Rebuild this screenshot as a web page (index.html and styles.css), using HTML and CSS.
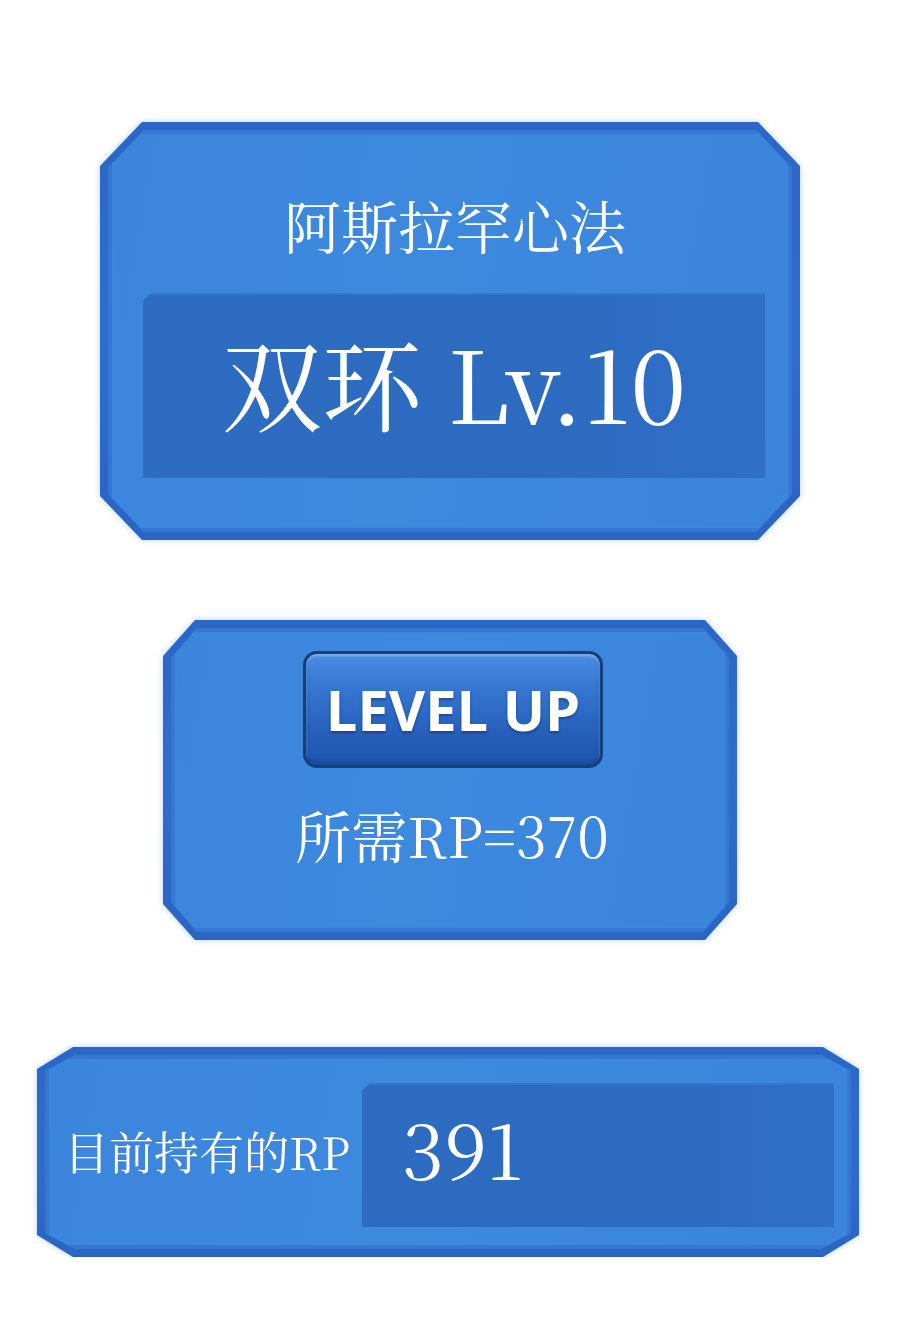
FILE: index.html
```html
<!DOCTYPE html>
<html lang="zh-CN">
<head>
  <meta charset="UTF-8">
  <title>阿斯拉罕心法</title>
  <link rel="stylesheet" href="styles.css">
</head>
<body>
<div class="page">
  <!-- skill card -->
  <div class="glow skill">
    <div class="frame">
      <div class="face">
        <div class="title">阿斯拉罕心法</div>
        <div class="well">
          <span class="level">双环 Lv.10</span>
        </div>
      </div>
    </div>
  </div>

  <!-- level up card -->
  <div class="glow upgrade">
    <div class="frame">
      <div class="face">
        <div class="btn">LEVEL UP</div>
        <div class="cost">所需RP=370</div>
      </div>
    </div>
  </div>

  <!-- rp bar -->
  <div class="glow wallet">
    <div class="frame">
      <div class="face">
        <div class="label">目前持有的RP</div>
        <div class="well">
          <span class="amount">391</span>
        </div>
      </div>
    </div>
  </div>
</div>
</body>
</html>
```
FILE: styles.css
```css
body {
  margin: 0;
  background: #fff;
  font-family: "Noto Serif CJK SC", "Liberation Serif", "Noto Sans CJK SC", serif;
  color: #fff;
}

.page {
  display: flex;
  flex-direction: column;
  align-items: center;
  padding-top: 122px;
}

.glow {
  filter: drop-shadow(0 0 3px rgba(90, 150, 235, 0.45));
}

.frame {
  --cx: 42px;
  --cy: 44px;
  background: linear-gradient(180deg, #2c66c6 0%, #2f6dcd 50%, #2a64c4 100%);
  padding: 8px;
  clip-path: polygon(var(--cx) 0, calc(100% - var(--cx)) 0, 100% var(--cy), 100% calc(100% - var(--cy)), calc(100% - var(--cx)) 100%, var(--cx) 100%, 0 calc(100% - var(--cy)), 0 var(--cy));
}

.face {
  --fx: calc(var(--cx) - 6px);
  --fy: calc(var(--cy) - 6px);
  background: linear-gradient(100deg, #3b86dc 0%, #3d89de 45%, #3a85db 100%);
  box-shadow: inset 0 0 0 4px #3478d4, inset 0 0 0 6px #3c87dc;
  clip-path: polygon(var(--fx) 0, calc(100% - var(--fx)) 0, 100% var(--fy), 100% calc(100% - var(--fy)), calc(100% - var(--fx)) 100%, var(--fx) 100%, 0 calc(100% - var(--fy)), 0 var(--fy));
}

.well {
  background: linear-gradient(90deg, #2e6cc2 0%, #2d6bc0 60%, #2f6fc6 100%);
  box-shadow: inset 0 2px 0 #3377cc;
  clip-path: polygon(8px 0, 100% 0, 100% 100%, 0 100%, 0 8px);
}

/* skill card */
.skill .frame {
  width: 684px;
}

.skill .face {
  padding: 64px 27px 54px 35px;
}

.title {
  font-size: 57px;
  line-height: 60px;
  text-align: center;
  margin-bottom: 39px;
  padding-left: 2px;
}

.skill .well {
  height: 185px;
  display: flex;
  align-items: center;
  justify-content: center;
}

.level {
  font-size: 100px;
  line-height: 1;
  padding-bottom: 10px;
}

/* level up card */
.upgrade {
  margin-top: 80px;
}

.upgrade .frame {
  --cx: 32px;
  --cy: 36px;
  width: 558px;
}

.upgrade .face {
  display: flex;
  flex-direction: column;
  align-items: center;
  padding: 23px 0 68px;
}

.btn {
  box-sizing: border-box;
  width: 300px;
  height: 117px;
  margin-left: 6px;
  padding-bottom: 2px;
  border: 3px solid #163d7c;
  border-radius: 14px;
  background: linear-gradient(180deg, #4a8de2 0%, #3577d2 30%, #2660bb 70%, #1e56ad 100%);
  box-shadow: inset 0 2px 3px rgba(255, 255, 255, 0.35), inset 0 -3px 4px rgba(10, 40, 100, 0.35);
  display: flex;
  align-items: center;
  justify-content: center;
  font-family: "Open Sans", "Noto Sans", sans-serif;
  font-weight: 700;
  font-size: 56px;
  text-shadow: 0 2px 3px rgba(10, 30, 80, 0.45);
}

.cost {
  margin-top: 36px;
  font-size: 56px;
  line-height: 60px;
  padding-left: 4px;
}

/* rp bar */
.wallet {
  margin-top: 107px;
  margin-left: -4px;
}

.wallet .frame {
  --cx: 36px;
  --cy: 22px;
  width: 806px;
}

.wallet .face {
  display: flex;
  align-items: center;
  gap: 13px;
  padding: 28px 17px 22px 19px;
}

.label {
  font-size: 45px;
  white-space: nowrap;
  width: 285px;
  padding-bottom: 10px;
}

.wallet .well {
  flex: 1;
  height: 144px;
  display: flex;
  align-items: center;
  padding-left: 40px;
}

.amount {
  font-size: 76px;
  line-height: 1;
  padding-bottom: 14px;
}
```
